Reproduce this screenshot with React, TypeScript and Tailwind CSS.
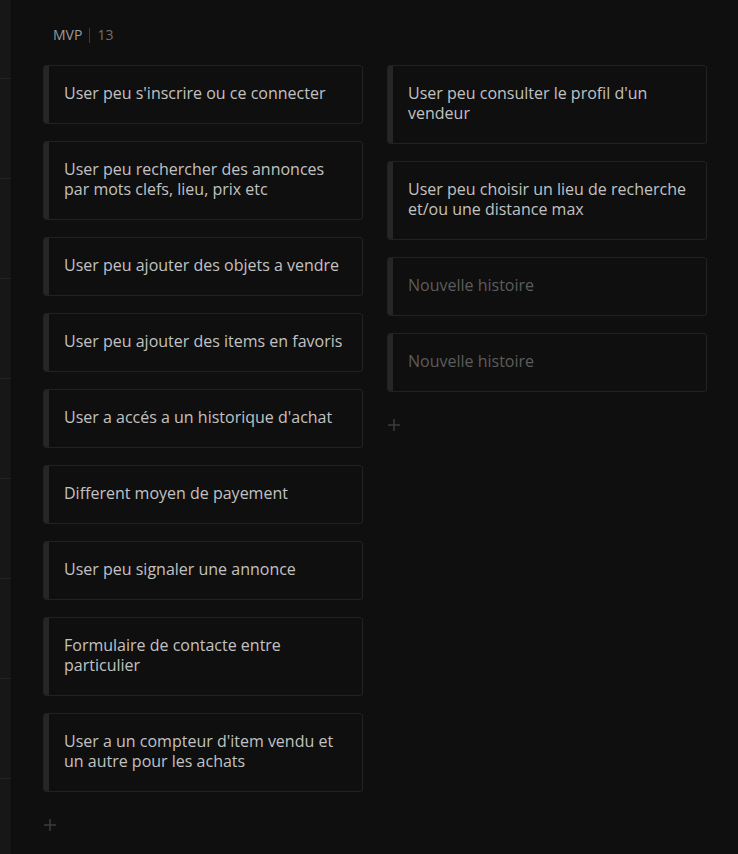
const left = [
  "User peu s'inscrire ou ce connecter",
  "User peu rechercher des annonces par mots clefs, lieu, prix etc",
  "User peu ajouter des objets a vendre",
  "User peu ajouter des items en favoris",
  "User a accés a un historique d'achat",
  "Different moyen de payement",
  "User peu signaler une annonce",
  "Formulaire de contacte entre particulier",
  "User a un compteur d'item vendu et un autre pour les achats",
];

const right = [
  { text: "User peu consulter le profil d'un vendeur" },
  { text: "User peu choisir un lieu de recherche et/ou une distance max" },
  { text: "Nouvelle histoire", placeholder: true },
  { text: "Nouvelle histoire", placeholder: true },
];

const Card = ({ text, placeholder }: { text: string; placeholder?: boolean }) => (
  <div className="flex rounded-[3px] border border-[#222] bg-[#0f0f0f] overflow-hidden">
    <div className="w-[5px] shrink-0 bg-[#262626]" />
    <div
      className={`flex-1 pl-[15px] pr-4 pt-[17px] pb-[20px] text-[16px] leading-5 ${
        placeholder ? "text-[#5c5c5c]" : "text-[#c2c2c2]"
      }`}
    >
      {text}
    </div>
  </div>
);

const Plus = () => (
  <svg width="12" height="12" viewBox="0 0 12 12" className="mt-[27px] ml-[1px]">
    <path d="M6 0v12M0 6h12" stroke="#3c3c3c" strokeWidth="1.5" />
  </svg>
);

export default function App() {
  return (
    <div
      className="flex w-[738px] h-[854px] bg-[#0f0f0f] overflow-hidden"
      style={{ fontFamily: '"Open Sans", sans-serif' }}
    >
      {/* side strip */}
      <div className="w-[12px] shrink-0 bg-[#171717] border-r border-[#0c0c0c] flex flex-col">
        <div className="h-[79px] border-b border-[#222] shrink-0" />
        {Array.from({ length: 8 }).map((_, i) => (
          <div key={i} className="h-[100px] border-b border-[#222] shrink-0" />
        ))}
      </div>

      <div className="flex-1 pl-[31px] pt-[27px]">
        <div className="flex items-center h-4 ml-[10px] text-[14px] leading-4">
          <span className="text-[#9a9a9a]">MVP</span>
          <span className="mx-[7px] w-px h-[15px] bg-[#3a3a3a]" />
          <span className="text-[#707070]">13</span>
        </div>

        <div className="flex gap-[24px] mt-[22px]">
          <div className="w-[320px] flex flex-col">
            <div className="flex flex-col gap-[17px]">
              {left.map((t) => (
                <Card key={t} text={t} />
              ))}
            </div>
            <Plus />
          </div>
          <div className="w-[320px] flex flex-col">
            <div className="flex flex-col gap-[17px]">
              {right.map((c, i) => (
                <Card key={i} text={c.text} placeholder={c.placeholder} />
              ))}
            </div>
            <Plus />
          </div>
        </div>
      </div>
    </div>
  );
}
